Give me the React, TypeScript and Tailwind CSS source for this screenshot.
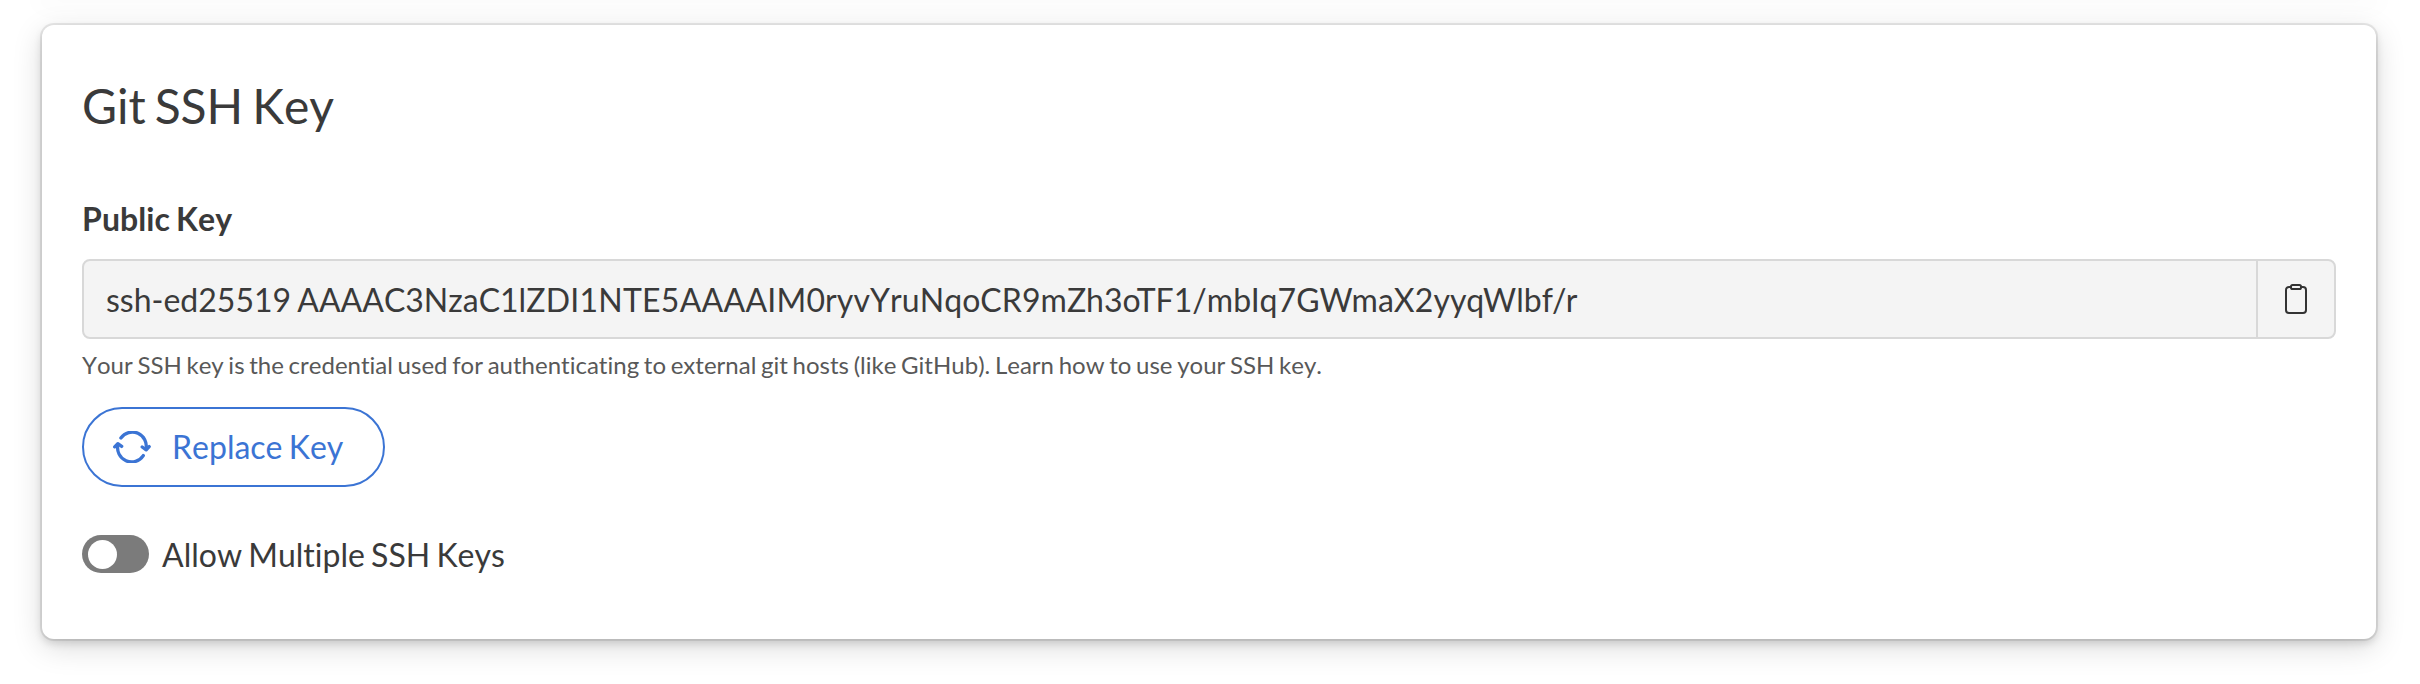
import React from "react";

function ClipboardIcon() {
  return (
    <svg width="22" height="30" viewBox="0 0 22 30" fill="none" stroke="#333333" strokeWidth="2">
      <path d="M6 2.9H4A3 3 0 0 0 1 5.9V26A3 3 0 0 0 4 29H18A3 3 0 0 0 21 26V5.9A3 3 0 0 0 18 2.9H16" />
      <rect x="6" y="1" width="10" height="4" rx="1.6" />
    </svg>
  );
}

function SyncIcon() {
  return (
    <svg
      width="38"
      height="32"
      viewBox="0 0 38 32"
      fill="none"
      stroke="#3b74d4"
      strokeWidth="3.3"
      strokeLinecap="round"
      strokeLinejoin="round"
    >
      <path d="M7.9 7A14 14 0 0 1 33 18" />
      <path d="M29.2 16L33.2 18.8L36.2 15.6" />
      <path d="M30.3 24.6A14 14 0 0 1 5 13.6" />
      <path d="M1.7 15.8L4.8 12.6L8.7 15.4" />
    </svg>
  );
}

export default function App() {
  return (
    <div className="h-[684px] w-[2420px] overflow-hidden bg-white pl-[42px] font-['Lato',sans-serif] text-[#3a3a3a] [font-kerning:none] [font-variant-ligatures:none]">
      <div className="h-0 w-[2334px] shadow-[0_0_24px_6px_rgba(0,0,0,0.03)]" />
      <section className="mt-[25px] flex h-[614px] w-[2334px] flex-col items-start rounded-[12px] bg-white px-[40px] shadow-[0_0_0_2px_rgba(0,0,0,0.08),0_4px_8px_rgba(0,0,0,0.14),0_8px_30px_rgba(0,0,0,0.15)]">
        <h1 className="mt-[51px] text-[48px] leading-[60px] tracking-[-0.1px] [word-spacing:-3px]">Git SSH Key</h1>
        <h2 className="mt-[63px] text-[32px] leading-[40px] font-bold tracking-[0.1px] [word-spacing:-2px]">Public Key</h2>
        <div className="mt-[20px] flex h-[80px] w-[2254px] rounded-[8px] border-2 border-[#d8d8d8] bg-[#f4f4f4]">
          <div className="flex flex-1 items-center pt-[2px] pl-[22px] text-[32px] leading-[40px]">
            <span className="whitespace-nowrap [word-spacing:-2px]">
              ssh-ed25519 AAAAC3NzaC1l
              <span className="tracking-[0.25px]">ZDI1NTE5AAAAIM</span>
              <span className="tracking-[0.07px]">0ryvYruNqoCR9m</span>
              <span className="[font-kerning:normal]">Zh3oTF1/</span>
              <span className="tracking-[0.15px] [font-kerning:normal]">mbIq7GWmaX2yyqWlbf/r</span>
            </span>
          </div>
          <button aria-label="Copy" className="flex w-[78px] items-center justify-center border-l-2 border-[#d8d8d8]">
            <ClipboardIcon />
          </button>
        </div>
        <p className="mt-[11px] text-[24px] leading-[30px] tracking-[0.01px] text-[#585858] [word-spacing:-1.5px]">
          Your SSH key is the credential used for authenticating to external git hosts (like GitHub). Learn how to use your SSH key.
        </p>
        <button className="mt-[27px] flex h-[80px] w-[303px] items-center rounded-full border-2 border-[#3b74d4] pl-[29px] text-[32px] leading-[40px] text-[#3b74d4] [word-spacing:-2px]">
          <SyncIcon />
          <span className="ml-[21px]">Replace Key</span>
        </button>
        <div className="mt-[48px] flex items-center">
          <div className="flex h-[38px] w-[67px] items-center rounded-full bg-[#7b7b7b] pl-[6px]">
            <div className="size-[29px] rounded-full bg-white" />
          </div>
          <span className="ml-[13px] pt-[2px] text-[32px] leading-[36px] [word-spacing:-2px]">Allow Multiple SSH Keys</span>
        </div>
      </section>
    </div>
  );
}
